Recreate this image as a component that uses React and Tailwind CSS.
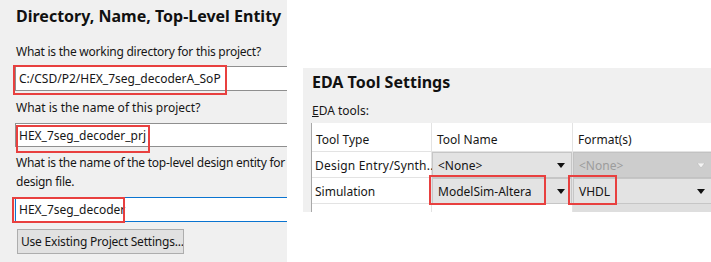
import React from "react";

const Arrow = ({ disabled }) => (
  <svg width="8" height="5" viewBox="0 0 8 5" className="shrink-0">
    <path
      d="M0 0 L8 0 L4 5 Z"
      fill={disabled ? "#f4f4f4" : "#111"}
      stroke={disabled ? "#b8b8b8" : "none"}
      strokeWidth="0.6"
    />
  </svg>
);

const Combo = ({ text, disabled }) => (
  <div
    className={`h-full flex items-center justify-between pl-[5px] pr-[6px] pt-[1px] border ${
      disabled
        ? "bg-[#cdcdcd] border-[#c2c2c2] text-[#9c9c9c]"
        : "bg-[#e3e3e3] border-[#c6c6c6] text-[#141414]"
    }`}
  >
    <span>{text}</span>
    <Arrow disabled={disabled} />
  </div>
);

const RedBox = ({ className }) => (
  <div className={`absolute border-2 border-[#e8403f] pointer-events-none z-10 ${className}`} />
);

export default function App() {
  return (
    <div className="w-[711px] h-[262px] flex bg-white overflow-hidden font-['Noto_Sans',sans-serif] text-[12px] text-[#161616]">
      {/* Left: new project wizard page */}
      <div className="w-[287px] h-full shrink-0 bg-[#f0f0f0] flex flex-col pl-[15px] overflow-hidden">
        <div className="shrink-0 h-[31px] flex items-center pl-[1px] text-[16px] font-bold text-[#111] whitespace-nowrap">
          Directory, Name, Top-Level Entity
        </div>

        <div className="shrink-0 mt-[10px] h-[22px] flex items-center pl-[1px] whitespace-nowrap tracking-[-0.25px]">
          What is the working directory for this project?
        </div>
        <div className="shrink-0 relative mt-[3px] h-[25px] bg-white border border-r-0 border-[#8f8f8f] flex items-center pl-[3px] pt-[1px]">
          C:/CSD/P2/HEX_7seg_decoderA_SoP
          <RedBox className="left-[-3px] top-[-2px] w-[214px] h-[30px]" />
        </div>

        <div className="shrink-0 mt-[6px] h-[22px] flex items-center pl-[1px] whitespace-nowrap">
          What is the name of this project?
        </div>
        <div className="shrink-0 relative mt-[4px] h-[24px] bg-white border border-r-0 border-[#8f8f8f] flex items-center pl-[3px] pt-[2px]">
          HEX_7seg_decoder_prj
          <RedBox className="left-[0px] top-[1px] w-[134px] h-[28px]" />
        </div>

        <div className="shrink-0 mt-[6px] h-[38px] leading-[19px] pl-[1px] overflow-hidden whitespace-nowrap tracking-[-0.25px]">
          What is the name of the top-level design entity for this
          <br />
          design file.
        </div>
        <div className="shrink-0 relative mt-[6px] h-[25px] bg-white border border-r-0 border-[#0a74d0] flex items-center pl-[3px] pt-[1px]">
          HEX_7seg_decoder
          <RedBox className="left-[-4px] top-[-1px] w-[113px] h-[26px]" />
        </div>

        <button className="shrink-0 mt-[7px] ml-[2px] w-[167px] h-[25px] bg-[#e1e1e1] border border-[#adadad] text-left pl-[3px] text-[#161616] whitespace-nowrap overflow-hidden tracking-[-0.2px]">
          Use Existing Project Settings...
        </button>
      </div>

      {/* Right: EDA tool settings page */}
      <div className="flex-1 pt-[68px] pl-[16px]">
        <div className="h-[144px] bg-[#f0f0f0] pl-[8px] flex flex-col overflow-hidden">
          <div className="shrink-0 h-[27px] flex items-center pl-[1px] pt-[1px] text-[16px] font-bold text-[#111] whitespace-nowrap">
            EDA Tool Settings
          </div>
          <div className="shrink-0 mt-[5px] h-[22px] flex items-center pl-[1px]">
            <span className="underline">E</span>DA tools:
          </div>
          <div className="shrink-0 mt-[1px] bg-white border-l border-[#a8a8a8] grid grid-cols-[120px_141px_139px] grid-rows-[29px_26px_26px_26px] whitespace-nowrap">
            <div className="flex items-center pl-[4px] pt-[6px] border-r border-b border-[#e3e3e3]">Tool Type</div>
            <div className="flex items-center pl-[5px] pt-[6px] border-r border-b border-[#e3e3e3]">Tool Name</div>
            <div className="flex items-center pl-[5px] pt-[6px] border-b border-[#e3e3e3]">Format(s)</div>

            <div className="flex items-center pl-[3px] pt-[2px] border-r border-b border-[#e3e3e3] tracking-[0.2px]">Design Entry/Synth...</div>
            <div className="border-r border-[#e3e3e3]">
              <Combo text="<None>" />
            </div>
            <div>
              <Combo text="<None>" disabled />
            </div>

            <div className="flex items-center pl-[3px] pt-[2px] border-r border-b border-[#e3e3e3]">Simulation</div>
            <div className="relative border-r border-[#e3e3e3]">
              <Combo text="ModelSim-Altera" />
              <RedBox className="left-[-3px] top-[-3px] w-[117px] h-[30px]" />
            </div>
            <div className="relative">
              <Combo text="VHDL" />
              <RedBox className="left-[-5px] top-[-3px] w-[49px] h-[30px]" />
            </div>

            <div className="border-r border-[#e3e3e3]" />
            <div className="border-r border-[#e3e3e3]" />
            <div className="bg-[#dedede]" />
          </div>
        </div>
      </div>
    </div>
  );
}
